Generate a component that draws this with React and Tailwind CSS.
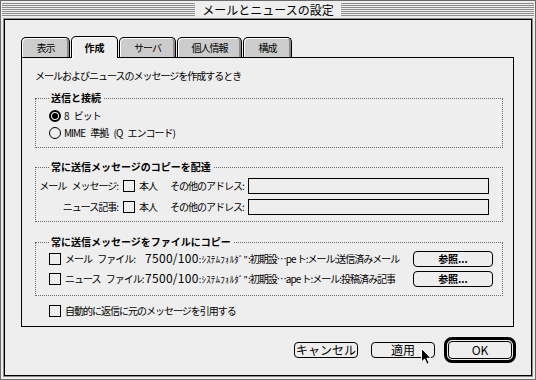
import React from "react";

function Radio({ on }) {
  return on ? (
    <span className="block w-[12px] h-[12px] rounded-full border-2 border-black flex items-center justify-center shrink-0">
      <span className="block w-[6px] h-[6px] rounded-full bg-black" />
    </span>
  ) : (
    <span className="block w-[12px] h-[12px] rounded-full border border-black shrink-0" />
  );
}

function Check({ className = "" }) {
  return (
    <span
      className={"block w-[12px] h-[12px] border border-black shrink-0 " + className}
    />
  );
}

function BrowseBtn() {
  return (
    <div className="ml-auto w-[80px] h-[16px] shrink-0 border border-black rounded-[4px] flex items-center justify-center font-bold tracking-[0px] leading-[14px] [word-spacing:0px]">
      参照...
    </div>
  );
}

const stripes =
  "flex-1 h-[13px] bg-[image:repeating-linear-gradient(to_bottom,#8c8c8c_0px,#8c8c8c_1px,transparent_1px,transparent_2px)]";

export default function App() {
  return (
    <div className="relative w-[536px] h-[380px] overflow-hidden bg-[#eeeeee] border border-[#6b6b6b] flex flex-col text-black font-['Noto_Sans_CJK_JP',sans-serif] text-[10px] leading-[14px] tracking-[-1px] [word-spacing:4px]">
      {/* title bar */}
      <div className="h-[17px] shrink-0 flex items-center px-[1px]">
        <div className={stripes} />
        <div className="px-[7px] text-[12px] leading-[17px] tracking-[0px]">
          メールとニュースの設定
        </div>
        <div className={stripes} />
      </div>

      <div className="flex-1 mx-[2px] mb-[2px] border border-[#8c8c8c]">
        <div className="h-full border border-black flex flex-col pl-[16px] pr-[15px] pt-[16px]">
          {/* tabs */}
          <div className="flex items-end gap-[1px] h-[21px]">
            <div className="w-[49px] h-[20px] bg-[#cccccc] border border-b-0 border-black rounded-t-[5px] shadow-[inset_1px_1px_0_#ffffff,inset_-2px_0_0_#8c8c8c] flex items-center justify-center">
              表示
            </div>
            <div className="relative z-10 -mb-[1px] w-[47px] h-[22px] bg-[#eeeeee] border border-b-0 border-black rounded-t-[5px] shadow-[inset_1px_1px_0_#ffffff] flex items-center justify-center font-bold tracking-[0px]">
              作成
            </div>
            <div className="w-[57px] h-[20px] bg-[#cccccc] border border-b-0 border-black rounded-t-[5px] shadow-[inset_1px_1px_0_#ffffff,inset_-2px_0_0_#8c8c8c] flex items-center justify-center">
              サーバ
            </div>
            <div className="w-[65px] h-[20px] bg-[#cccccc] border border-b-0 border-black rounded-t-[5px] shadow-[inset_1px_1px_0_#ffffff,inset_-2px_0_0_#8c8c8c] flex items-center justify-center">
              個人情報
            </div>
            <div className="w-[49px] h-[20px] bg-[#cccccc] border border-b-0 border-black rounded-t-[5px] shadow-[inset_1px_1px_0_#ffffff,inset_-2px_0_0_#8c8c8c] flex items-center justify-center">
              構成
            </div>
          </div>

          {/* panel */}
          <div className="mr-[2px] h-[270px] shrink-0 border border-black bg-[#eeeeee] pt-[11px] pl-[13px] pr-[10px] flex flex-col">
            <div className="whitespace-nowrap">
              メールおよびニュースのメッセージを作成するとき
            </div>

            {/* group 1 */}
            <fieldset className="mt-[8px] border border-dotted border-[#6a6a6a] pl-[13px] pt-[4px] pb-[7px]">
              <legend className="px-[2px] font-bold tracking-[0px] leading-[14px]">
                送信と接続
              </legend>
              <div className="flex items-center h-[14px]">
                <Radio on />
                <span className="ml-[3px] whitespace-nowrap">8 ビット</span>
              </div>
              <div className="flex items-center h-[14px] mt-[3px]">
                <Radio />
                <span className="ml-[3px] whitespace-nowrap">MIME 準拠 (Q エンコード)</span>
              </div>
            </fieldset>

            {/* group 2 */}
            <fieldset className="mt-[12px] border border-dotted border-[#6a6a6a] pr-[13px] pt-[4px] pb-[6px]">
              <legend className="ml-[13px] px-[2px] font-bold tracking-[0px] leading-[14px]">
                常に送信メッセージのコピーを配達
              </legend>
              <div className="flex items-center h-[16px]">
                <span className="w-[82px] shrink-0 text-right whitespace-nowrap">
                  メール メッセージ:
                </span>
                <Check className="ml-[5px]" />
                <span className="ml-[4px] whitespace-nowrap">本人</span>
                <span className="ml-[13px] whitespace-nowrap">その他のアドレス:</span>
                <span className="ml-[4px] flex-1 h-[16px] border border-black" />
              </div>
              <div className="flex items-center h-[16px] mt-[5px]">
                <span className="w-[82px] shrink-0 text-right whitespace-nowrap">
                  ニュース記事:
                </span>
                <Check className="ml-[5px]" />
                <span className="ml-[4px] whitespace-nowrap">本人</span>
                <span className="ml-[13px] whitespace-nowrap">その他のアドレス:</span>
                <span className="ml-[4px] flex-1 h-[16px] border border-black" />
              </div>
            </fieldset>

            {/* group 3 */}
            <fieldset className="mt-[13px] border border-dotted border-[#6a6a6a] pl-[13px] pr-[9px] pt-[2px] pb-[8px]">
              <legend className="px-[2px] font-bold tracking-[0px] leading-[14px]">
                常に送信メッセージをファイルにコピー
              </legend>
              <div className="flex items-center h-[16px]">
                <Check />
                <span className="ml-[4px] w-[80px] shrink-0 whitespace-nowrap">
                  メール ファイル:
                </span>
                <span className="shrink-0 whitespace-nowrap [word-spacing:0px]">
                  <span className="text-[12px] tracking-[0.3px]">7500/100</span>
                  <span className="text-[9px] tracking-[0.2px]">:ｼｽﾃﾑﾌｫﾙﾀﾞ"</span>
                  <span className="tracking-[-1px]">:初期設…pe ト:メール:送信済みメール</span>
                </span>
                <BrowseBtn />
              </div>
              <div className="flex items-center h-[16px] mt-[4px]">
                <Check />
                <span className="ml-[4px] w-[80px] shrink-0 whitespace-nowrap">
                  ニュース ファイル:
                </span>
                <span className="shrink-0 whitespace-nowrap [word-spacing:0px]">
                  <span className="text-[12px] tracking-[0.3px]">7500/100</span>
                  <span className="text-[9px] tracking-[0.2px]">:ｼｽﾃﾑﾌｫﾙﾀﾞ"</span>
                  <span className="tracking-[-1px]">:初期設…ape ト:メール:投稿済み記事</span>
                </span>
                <BrowseBtn />
              </div>
            </fieldset>

            <div className="mt-[8px] ml-[14px] flex items-center h-[14px]">
              <Check />
              <span className="ml-[4px] whitespace-nowrap">
                自動的に返信に元のメッセージを引用する
              </span>
            </div>
          </div>

          {/* bottom buttons */}
          <div className="mt-[10px] h-[26px] flex items-center justify-end text-[12px] tracking-[0px] [word-spacing:0px]">
            <div className="w-[64px] h-[16px] border border-black rounded-[4px] flex items-center justify-center leading-[14px]">
              キャンセル
            </div>
            <div className="ml-[13px] w-[64px] h-[16px] border border-black rounded-[4px] flex items-center justify-center leading-[14px]">
              適用
            </div>
            <div className="ml-[9px] w-[72px] h-[26px] border-[3px] border-black rounded-[8px] p-[1px]">
              <div className="h-full border border-black rounded-[4px] flex items-center justify-center leading-[14px]">
                OK
              </div>
            </div>
          </div>
        </div>
      </div>

      {/* mouse cursor */}
      <svg
        className="absolute left-[420px] top-[347px]"
        width="11"
        height="17"
        viewBox="0 0 11 17"
      >
        <path
          d="M0.5 0.5 V14 L3.6 11 L6 16.3 L8.2 15.3 L5.9 10.3 H10 Z"
          fill="#000"
          stroke="#fff"
          strokeWidth="1"
          strokeLinejoin="miter"
        />
      </svg>
    </div>
  );
}
